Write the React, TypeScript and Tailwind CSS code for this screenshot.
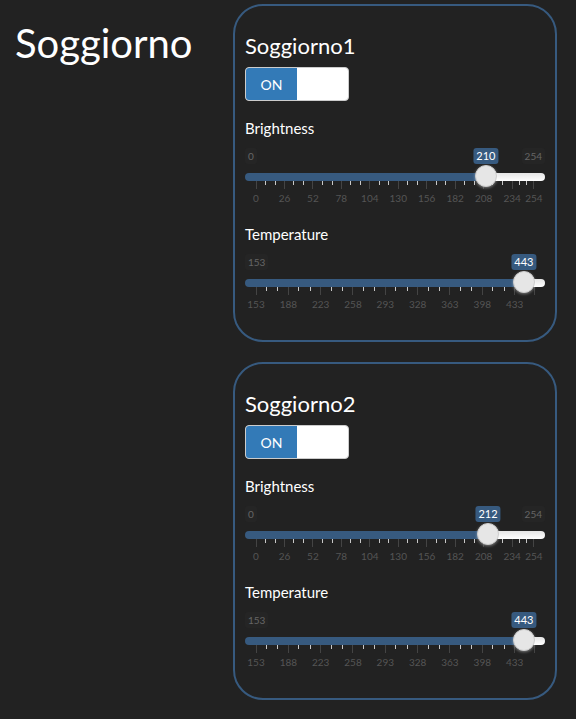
import { useState, type CSSProperties } from "react";

type SliderProps = {
  id: string;
  label: string;
  min: number;
  max: number;
  step: number;
  initial: number;
  showMax: boolean;
};

type LightProps = { name: string; brightness: number; temperature: number };

function Scale({ min, max, step, showMax }: Pick<SliderProps, "min" | "max" | "step" | "showMax">) {
  const stops: number[] = [];
  for (let v = min; v < max; v += step) stops.push(v);

  return (
    <div className="flex h-7 px-[11px]" aria-hidden="true">
      {stops.map((v) => (
        <div key={v} className="flex basis-0 items-start" style={{ flexGrow: Math.min(step, max - v) }}>
          <Tick value={v} />
          <div className="h-1 flex-1 border-r border-[#c8c8c8]" />
          <div className="h-1 flex-1 border-r border-[#c8c8c8]" />
          <div className="flex-1" />
        </div>
      ))}
      <Tick value={showMax ? max : undefined} />
    </div>
  );
}

function Tick({ value }: { value?: number }) {
  return (
    <div className="flex w-0 flex-col items-center">
      <div className="h-2 w-px shrink-0 bg-[#444444]" />
      <span className="mt-[3px] text-[10px] leading-3 text-[#555555]">{value}</span>
    </div>
  );
}

function Slider({ id, label, min, max, step, initial, showMax }: SliderProps) {
  const [value, setValue] = useState(initial);
  const ratio = (value - min) / (max - min);
  const fill = { "--fill": `calc(11px + (100% - 22px) * ${ratio})` } as CSSProperties;

  return (
    <div className="mb-[15px]">
      <label htmlFor={id} className="block text-[15px] leading-5">
        {label}
      </label>
      <div className="relative mt-[10px] flex h-4 items-start justify-between text-[10px] leading-4" style={fill}>
        <span className="rounded-[3px] bg-[#252525] px-[3px] text-[#666666]">{min}</span>
        {showMax && <span className="rounded-[3px] bg-[#252525] px-[3px] text-[#666666]">{max}</span>}
        <output
          htmlFor={id}
          className="absolute left-(--fill) -translate-x-1/2 rounded-[3px] bg-[#375a7f] px-[3px] text-[11px] leading-4 text-white"
        >
          {value}
        </output>
      </div>
      <input
        id={id}
        type="range"
        min={min}
        max={max}
        value={value}
        onChange={(e) => setValue(Number(e.target.value))}
        style={fill}
        className="relative z-10 mt-[9px] block h-2 w-full cursor-pointer appearance-none rounded-full bg-[linear-gradient(to_right,#375a7f_var(--fill),transparent_var(--fill)),linear-gradient(to_bottom,#e6e6e6,#ffffff)] [&::-webkit-slider-runnable-track]:h-2 [&::-webkit-slider-thumb]:-mt-2 [&::-webkit-slider-thumb]:size-[22px] [&::-webkit-slider-thumb]:appearance-none [&::-webkit-slider-thumb]:rounded-full [&::-webkit-slider-thumb]:border [&::-webkit-slider-thumb]:border-[#cccccc] [&::-webkit-slider-thumb]:bg-[#e6e6e6] [&::-webkit-slider-thumb]:shadow-[0_1px_3px_rgba(255,255,255,0.4)]"
      />
      <Scale min={min} max={max} step={step} showMax={showMax} />
    </div>
  );
}

function Light({ name, brightness, temperature }: LightProps) {
  const [on, setOn] = useState(true);

  return (
    <section className="rounded-[30px] border-2 border-[#375a7f] px-[10px] pt-[26px] pb-[10px]">
      <h2 className="text-[22px] leading-7">{name}</h2>
      <button
        type="button"
        role="switch"
        aria-checked={on}
        aria-label={name}
        onClick={() => setOn(!on)}
        className="mt-[7px] mb-[17px] flex h-[34px] w-[104px] overflow-hidden rounded-[4px] border border-[#cccccc] bg-white text-[14px]"
      >
        <span className={on ? "flex h-full w-1/2 items-center justify-center bg-[#337ab7]" : "ml-auto flex h-full w-1/2 items-center justify-center bg-[#e6e6e6] text-[#333333]"}>
          {on ? "ON" : "OFF"}
        </span>
      </button>
      <Slider id={`${name}-brightness`} label="Brightness" min={0} max={254} step={26} initial={brightness} showMax />
      <Slider id={`${name}-temperature`} label="Temperature" min={153} max={454} step={35} initial={temperature} showMax={false} />
    </section>
  );
}

export default function App() {
  return (
    <main className="flex min-h-screen items-start bg-[#222222] pr-[19px] pl-[15px] font-['Lato',sans-serif] text-white">
      <h1 className="w-[218px] shrink-0 pt-[19px] text-[40px] leading-12">Soggiorno</h1>
      <div className="flex min-w-0 flex-1 flex-col gap-5 py-1">
        <Light name="Soggiorno1" brightness={210} temperature={443} />
        <Light name="Soggiorno2" brightness={212} temperature={443} />
      </div>
    </main>
  );
}
